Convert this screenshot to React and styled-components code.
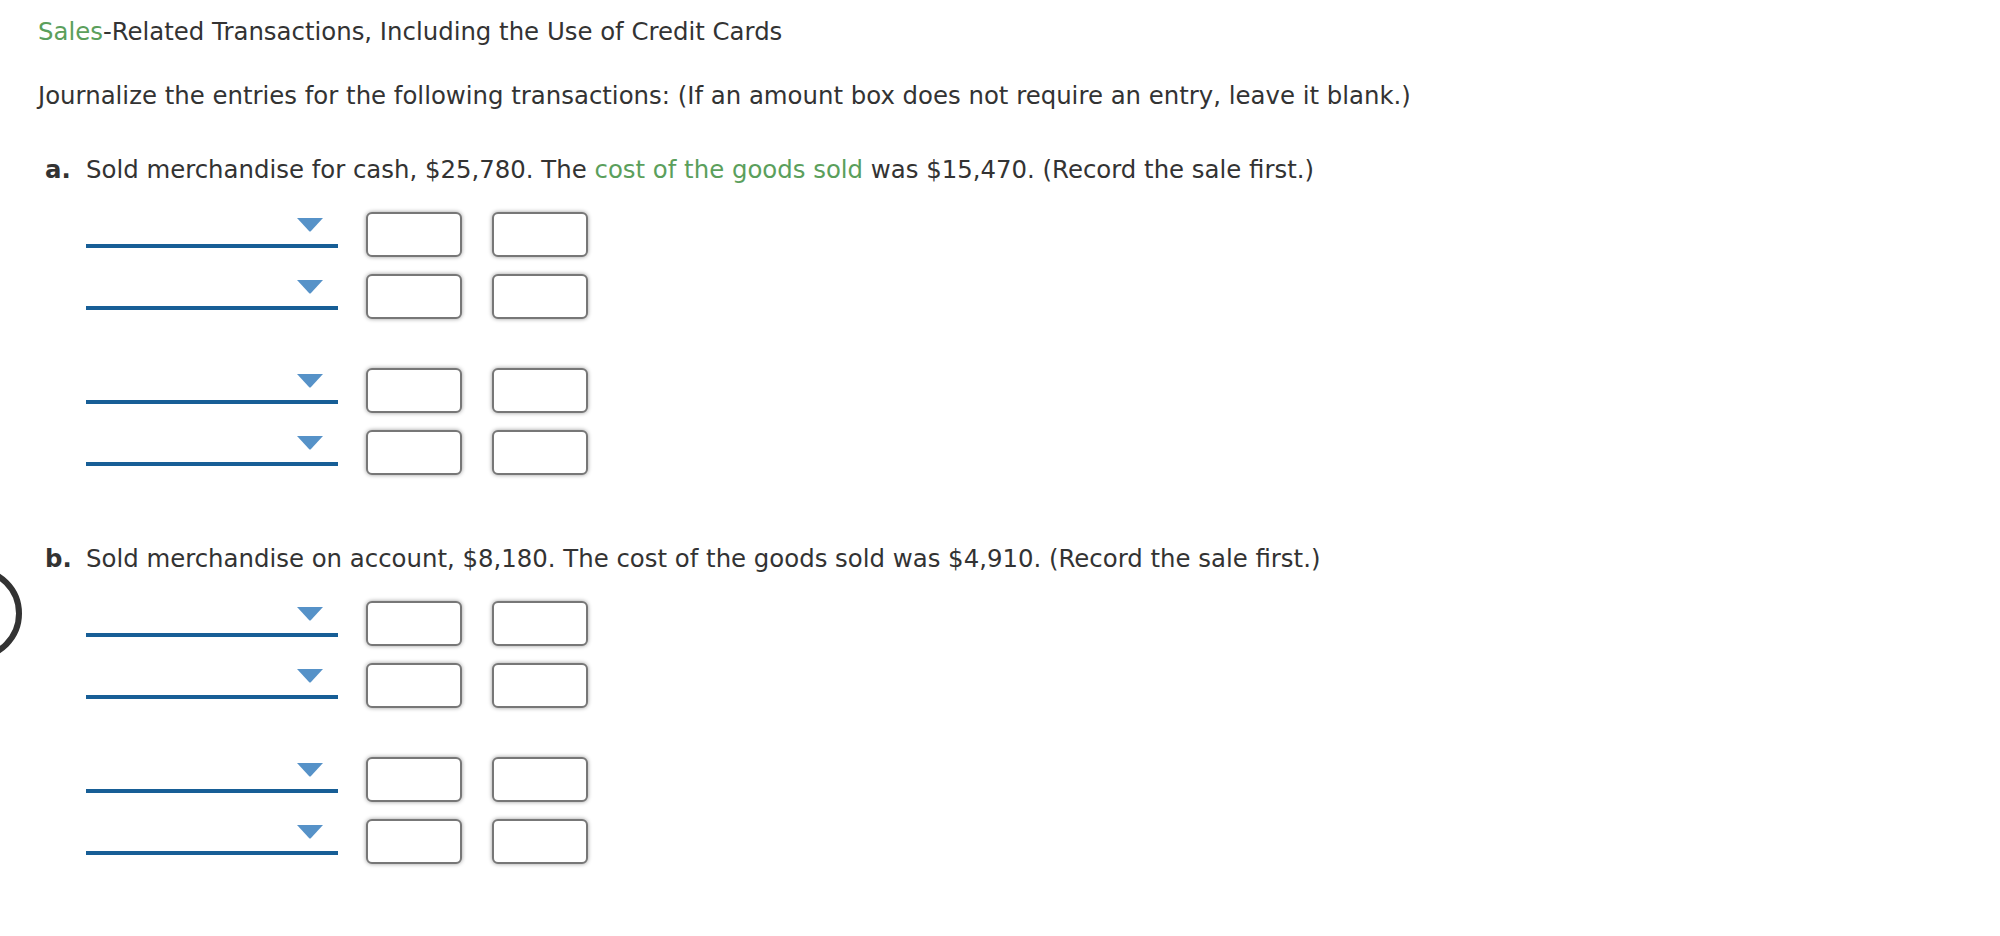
import React from "react";
import styled, { createGlobalStyle } from "styled-components";

const GlobalStyle = createGlobalStyle`
  html, body { margin: 0; padding: 0; background: #ffffff; }
  body {
    font-family: "DejaVu Sans", Verdana, sans-serif;
    color: #333333;
  }
`;

const Page = styled.main`
  position: relative;
  min-height: 936px;
  padding: 16px 0 0 38px;
  box-sizing: border-box;
  overflow: hidden;
`;

const Heading = styled.p`
  margin: 0;
  font-size: 24.4px;
  line-height: 32px;
`;

const Instruction = styled.p`
  margin: 32px 0 0;
  font-size: 24.4px;
  line-height: 32px;
`;

const Green = styled.span`
  color: #5b9f5c;
`;

const Part = styled.section`
  margin-top: ${(p) => p.$top}px;
  padding-left: 7px;
`;

const Prompt = styled.p`
  margin: 0;
  font-size: 24.4px;
  line-height: 32px;
`;

const Label = styled.span`
  display: inline-block;
  width: 41px;
  font-weight: bold;
`;

const Entries = styled.div`
  margin: 26px 0 0 41px;
  display: flex;
  flex-direction: column;
  gap: 49px;
`;

const Group = styled.div`
  display: flex;
  flex-direction: column;
  gap: 17px;
`;

const Row = styled.div`
  display: flex;
  align-items: flex-start;
  height: 45px;
`;

const Select = styled.div`
  width: 252px;
  height: 36px;
  box-sizing: border-box;
  border-bottom: 4px solid #175e96;
  display: flex;
  justify-content: flex-end;
  align-items: flex-start;
  padding: 5px 14px 0 0;
`;

const Amounts = styled.div`
  display: flex;
  gap: 30px;
  margin-left: 28px;
`;

const AmountBox = styled.div`
  width: 96px;
  height: 45px;
  box-sizing: border-box;
  border: 2px solid #777777;
  border-radius: 6px;
  background: #ffffff;
  box-shadow: 0 0 4px rgba(0, 0, 0, 0.4);
`;

const Ring = styled.div`
  position: absolute;
  left: -71px;
  top: 567px;
  width: 93px;
  height: 93px;
  box-sizing: border-box;
  border: 6px solid #333333;
  border-radius: 50%;
`;

const Caret = () => (
  <svg width="28" height="15" viewBox="0 0 28 15" aria-hidden="true">
    <path d="M1 1 L27 1 L15 14 Q14 15 13 14 Z" fill="#5692c8" />
  </svg>
);

const EntryRow = () => (
  <Row>
    <Select>
      <Caret />
    </Select>
    <Amounts>
      <AmountBox />
      <AmountBox />
    </Amounts>
  </Row>
);

const JournalEntries = () => (
  <Entries>
    <Group>
      <EntryRow />
      <EntryRow />
    </Group>
    <Group>
      <EntryRow />
      <EntryRow />
    </Group>
  </Entries>
);

export default function App() {
  return (
    <>
      <GlobalStyle />
      <Page>
        <Heading>
          <Green>Sales</Green>-Related Transactions, Including the Use of Credit Cards
        </Heading>
        <Instruction>
          Journalize the entries for the following transactions: (If an amount box does not require an entry, leave it blank.)
        </Instruction>
        <Part $top={42}>
          <Prompt>
            <Label>a.</Label>Sold merchandise for cash, $25,780. The{" "}
            <Green>cost of the goods sold</Green> was $15,470. (Record the sale first.)
          </Prompt>
          <JournalEntries />
        </Part>
        <Part $top={68}>
          <Prompt>
            <Label>b.</Label>Sold merchandise on account, $8,180. The cost of the goods sold was $4,910. (Record the sale first.)
          </Prompt>
          <JournalEntries />
        </Part>
        <Ring />
      </Page>
    </>
  );
}
